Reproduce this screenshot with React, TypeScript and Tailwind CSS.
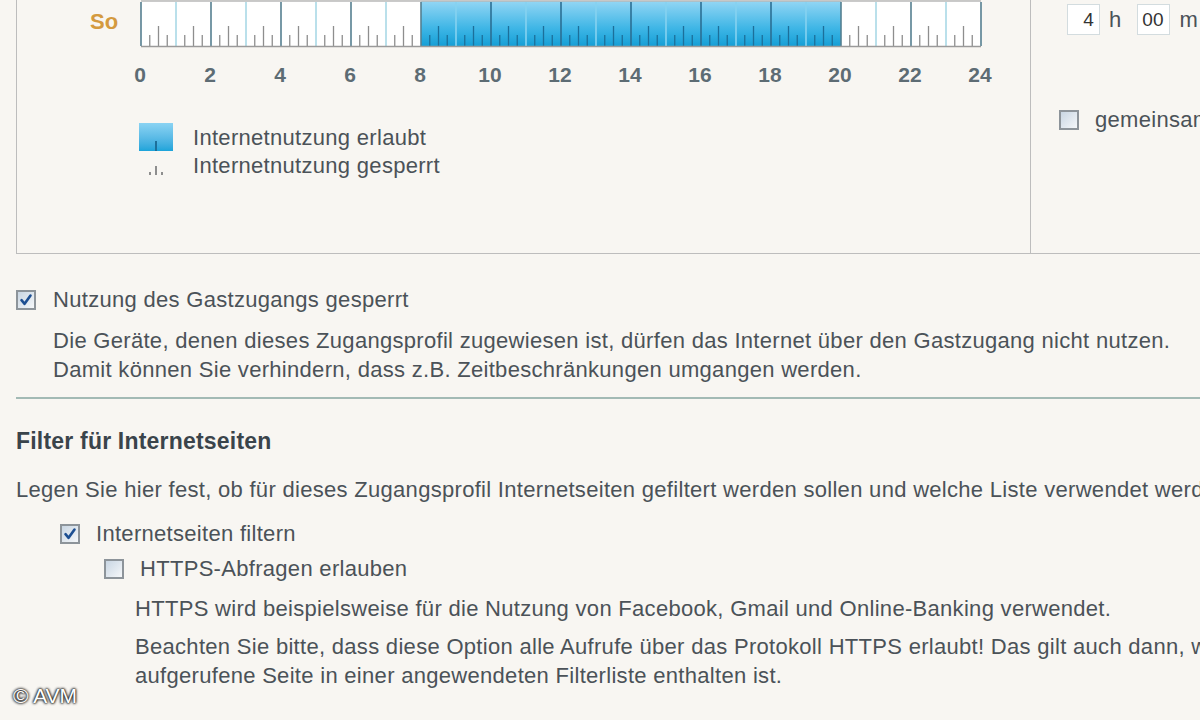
import React from "react";

const F = { fontFamily: '"Liberation Sans", Arial, sans-serif' };

function Timeline() {
  const W = 842;
  const lines: React.ReactNode[] = [];
  for (let h = 0; h <= 24; h++) {
    const x = 1 + h * 35;
    const blue = h > 8 && h < 20;
    if (h % 2 === 0) {
      lines.push(<line key={"h" + h} x1={x} y1={2} x2={x} y2={46} stroke={blue ? "#2b6f93" : "#557f90"} strokeWidth={1.6} />);
    } else {
      lines.push(<line key={"h" + h} x1={x} y1={2} x2={x} y2={46} stroke={blue ? "#86d2f0" : "#a9d9e6"} strokeWidth={1.6} />);
    }
    if (h < 24) {
      const inBlue = h >= 8 && h < 20;
      const c = inBlue ? "#1c6f9a" : "#8e8e8e";
      [8.75, 17.5, 26.25].forEach((o, i) => {
        const top = i === 1 ? 26 : 35;
        lines.push(<line key={"t" + h + i} x1={x + o} y1={top} x2={x + o} y2={46} stroke={c} strokeWidth={1.3} />);
      });
    }
  }
  return (
    <svg width={W} height={48} viewBox={`0 0 ${W} 48`} className="block shrink-0">
      <defs>
        <linearGradient id="bl" x1="0" y1="0" x2="0" y2="1">
          <stop offset="0" stopColor="#93d6f4" />
          <stop offset="0.6" stopColor="#3fb6e6" />
          <stop offset="1" stopColor="#159fd6" />
        </linearGradient>
      </defs>
      <rect x={1} y={1} width={840} height={45} fill="#ffffff" />
      <rect x={281} y={1} width={420} height={45} fill="url(#bl)" />
      <line x1={1} y1={1} x2={841} y2={1} stroke="#b9b9b9" strokeWidth={1.5} />
      {lines}
      <line x1={1} y1={46.5} x2={841} y2={46.5} stroke="#9a9a9a" strokeWidth={1.5} />
    </svg>
  );
}

function Checkbox({ checked, className = "" }: { checked?: boolean; className?: string }) {
  return (
    <div className={"w-[20px] h-[20px] shrink-0 border-2 border-[#8d949a] bg-gradient-to-br from-[#c9d6e3] to-[#f5f7f9] flex items-center justify-center " + className}>
      {checked && (
        <svg width="14" height="14" viewBox="0 0 14 14">
          <path d="M2.5 7.2 L5.6 10.8 L11.5 2.5" fill="none" stroke="#1d4f92" strokeWidth="2.6" strokeLinecap="round" strokeLinejoin="round" />
        </svg>
      )}
    </div>
  );
}

export default function App() {
  const nums = [0, 2, 4, 6, 8, 10, 12, 14, 16, 18, 20, 22, 24];
  return (
    <div className="w-[1200px] h-[720px] overflow-hidden bg-[#f8f6f2] text-[#4b5258] text-[22px] tracking-[0.3px] relative" style={F}>
      {/* top panel */}
      <div className="ml-[16px] h-[254px] border-l-[1.5px] border-b-[1.5px] border-[#bdbdbd] flex">
        <div className="w-[1014px] shrink-0 border-r-[1.5px] border-[#bdbdbd] flex flex-col">
          <div className="flex items-start h-[48px]">
            <div className="w-[73px] shrink-0" />
            <div className="w-[50px] shrink-0 pt-[8px] font-bold text-[#d49a3f] leading-[28px] tracking-normal">So</div>
            <Timeline />
          </div>
          <div className="flex ml-[88px] mt-[14px] font-bold text-[21px] text-[#5d6c74] leading-[26px] tracking-normal">
            {nums.map((n) => (
              <div key={n} className="w-[70px] shrink-0 text-center">{n}</div>
            ))}
          </div>
          <div className="flex mt-[35px] ml-[122px] gap-[20px]">
            <div className="flex flex-col w-[34px]">
              <div className="h-[28px] bg-gradient-to-b from-[#8ad3f3] to-[#1aa4da] relative">
                <div className="absolute left-[16px] bottom-0 w-[1.5px] h-[10px] bg-[#1c6f9a]" />
              </div>
              <div className="h-[28px] relative">
                <div className="absolute left-[10px] bottom-[4px] w-[1.5px] h-[3px] bg-[#8e8e8e]" />
                <div className="absolute left-[16px] bottom-[4px] w-[1.5px] h-[9px] bg-[#8e8e8e]" />
                <div className="absolute left-[22px] bottom-[4px] w-[1.5px] h-[3px] bg-[#8e8e8e]" />
              </div>
            </div>
            <div className="flex flex-col leading-[28px] pt-[1px]">
              <div>Internetnutzung erlaubt</div>
              <div>Internetnutzung gesperrt</div>
            </div>
          </div>
        </div>
        <div className="flex-1 min-w-0 flex flex-col overflow-hidden">
          <div className="flex items-center mt-[3px] ml-[36px] whitespace-nowrap">
            <div className="w-[33px] h-[31px] shrink-0 bg-white border border-[#d3dcdf] text-right pr-[5px] text-[19px] leading-[29px] text-[#333]">4</div>
            <span className="ml-[9px]">h</span>
            <div className="ml-[15px] w-[33px] h-[31px] shrink-0 bg-white border border-[#d3dcdf] text-center text-[19px] leading-[29px] text-[#333]">00</div>
            <span className="ml-[10px]">m</span>
          </div>
          <div className="flex items-center mt-[67px] ml-[28px] whitespace-nowrap">
            <Checkbox />
            <span className="ml-[16px]">gemeinsam</span>
          </div>
        </div>
      </div>

      {/* guest access */}
      <div className="flex items-center mt-[34px] ml-[16px]">
        <Checkbox checked />
        <span className="ml-[17px] leading-[24px]">Nutzung des Gastzugangs gesperrt</span>
      </div>
      <div className="ml-[53px] mt-[14px] leading-[29px] whitespace-nowrap">
        <div>Die Geräte, denen dieses Zugangsprofil zugewiesen ist, dürfen das Internet über den Gastzugang nicht nutzen.</div>
        <div>Damit können Sie verhindern, dass z.B. Zeitbeschränkungen umgangen werden.</div>
      </div>

      <div className="ml-[16px] mt-[13px] h-[2px] bg-[#a3bab5]" />

      <div className="ml-[16px] mt-[29px] font-bold text-[23px] tracking-[0.2px] text-[#3a444b] leading-[26px]">Filter für Internetseiten</div>
      <div className="ml-[16px] mt-[23px] leading-[26px] whitespace-nowrap">Legen Sie hier fest, ob für dieses Zugangsprofil Internetseiten gefiltert werden sollen und welche Liste verwendet werden soll.</div>

      <div className="flex items-center mt-[18px] ml-[60px]">
        <Checkbox checked />
        <span className="ml-[16px] leading-[26px]">Internetseiten filtern</span>
      </div>
      <div className="flex items-center mt-[9px] ml-[104px]">
        <Checkbox />
        <span className="ml-[16px] leading-[26px]">HTTPS-Abfragen erlauben</span>
      </div>
      <div className="ml-[135px] mt-[14px] leading-[26px] whitespace-nowrap">HTTPS wird beispielsweise für die Nutzung von Facebook, Gmail und Online-Banking verwendet.</div>
      <div className="ml-[135px] mt-[10px] leading-[29px] whitespace-nowrap">
        <div>Beachten Sie bitte, dass diese Option alle Aufrufe über das Protokoll HTTPS erlaubt! Das gilt auch dann, wenn die</div>
        <div>aufgerufene Seite in einer angewendeten Filterliste enthalten ist.</div>
      </div>

      <div className="absolute left-[13px] top-[684px] text-[21px] text-white leading-[24px] tracking-normal" style={{ textShadow: "0 0 3px #222, 0 0 3px #222, 0 0 2px #000" }}>© AVM</div>
    </div>
  );
}
